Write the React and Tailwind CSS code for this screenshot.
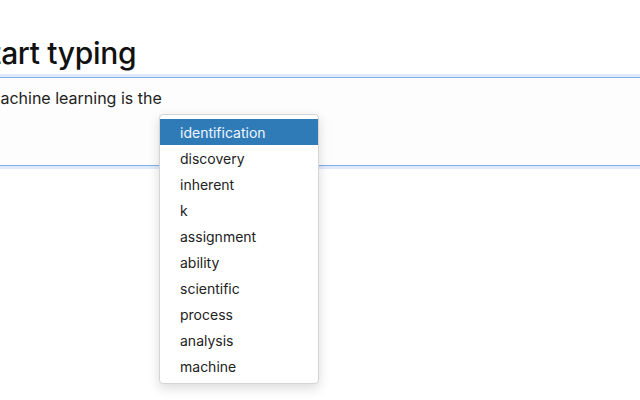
import React from "react";

const items = [
  "identification",
  "discovery",
  "inherent",
  "k",
  "assignment",
  "ability",
  "scientific",
  "process",
  "analysis",
  "machine",
];

export default function App() {
  return (
    <div
      className="relative w-[640px] h-[400px] overflow-hidden bg-white text-[#1a1a1a]"
      style={{ fontFamily: "Inter, 'Noto Sans', sans-serif" }}
    >
      <div className="ml-[-28px] pt-[35px]">
        <h1 className="text-[30px] leading-[36px] font-medium tracking-[-0.3px] text-[#111]">
          Start typing
        </h1>
      </div>
      <div className="mt-[6px] ml-[-20px] w-[700px] h-[89px] bg-[#fdfdfd] border border-[#80aee6] shadow-[0_0_0_3px_#dfeafb] pt-[8px] pl-[5px]">
        <p className="text-[16px] leading-[24px] text-[#222]">Machine learning is the</p>
      </div>
      <div className="absolute left-[159px] top-[114px] w-[160px] bg-white border border-[#d4d4d4] rounded-[4px] shadow-[0_4px_12px_rgba(0,0,0,0.15)] py-[4px]">
        {items.map((it, i) => (
          <div
            key={it}
            className={
              "h-[26px] flex items-center pl-[20px] text-[14px] " +
              (i === 0 ? "bg-[#2e7bb8] text-[#eef6ff]" : "text-[#222]")
            }
          >
            {it}
          </div>
        ))}
      </div>
    </div>
  );
}
